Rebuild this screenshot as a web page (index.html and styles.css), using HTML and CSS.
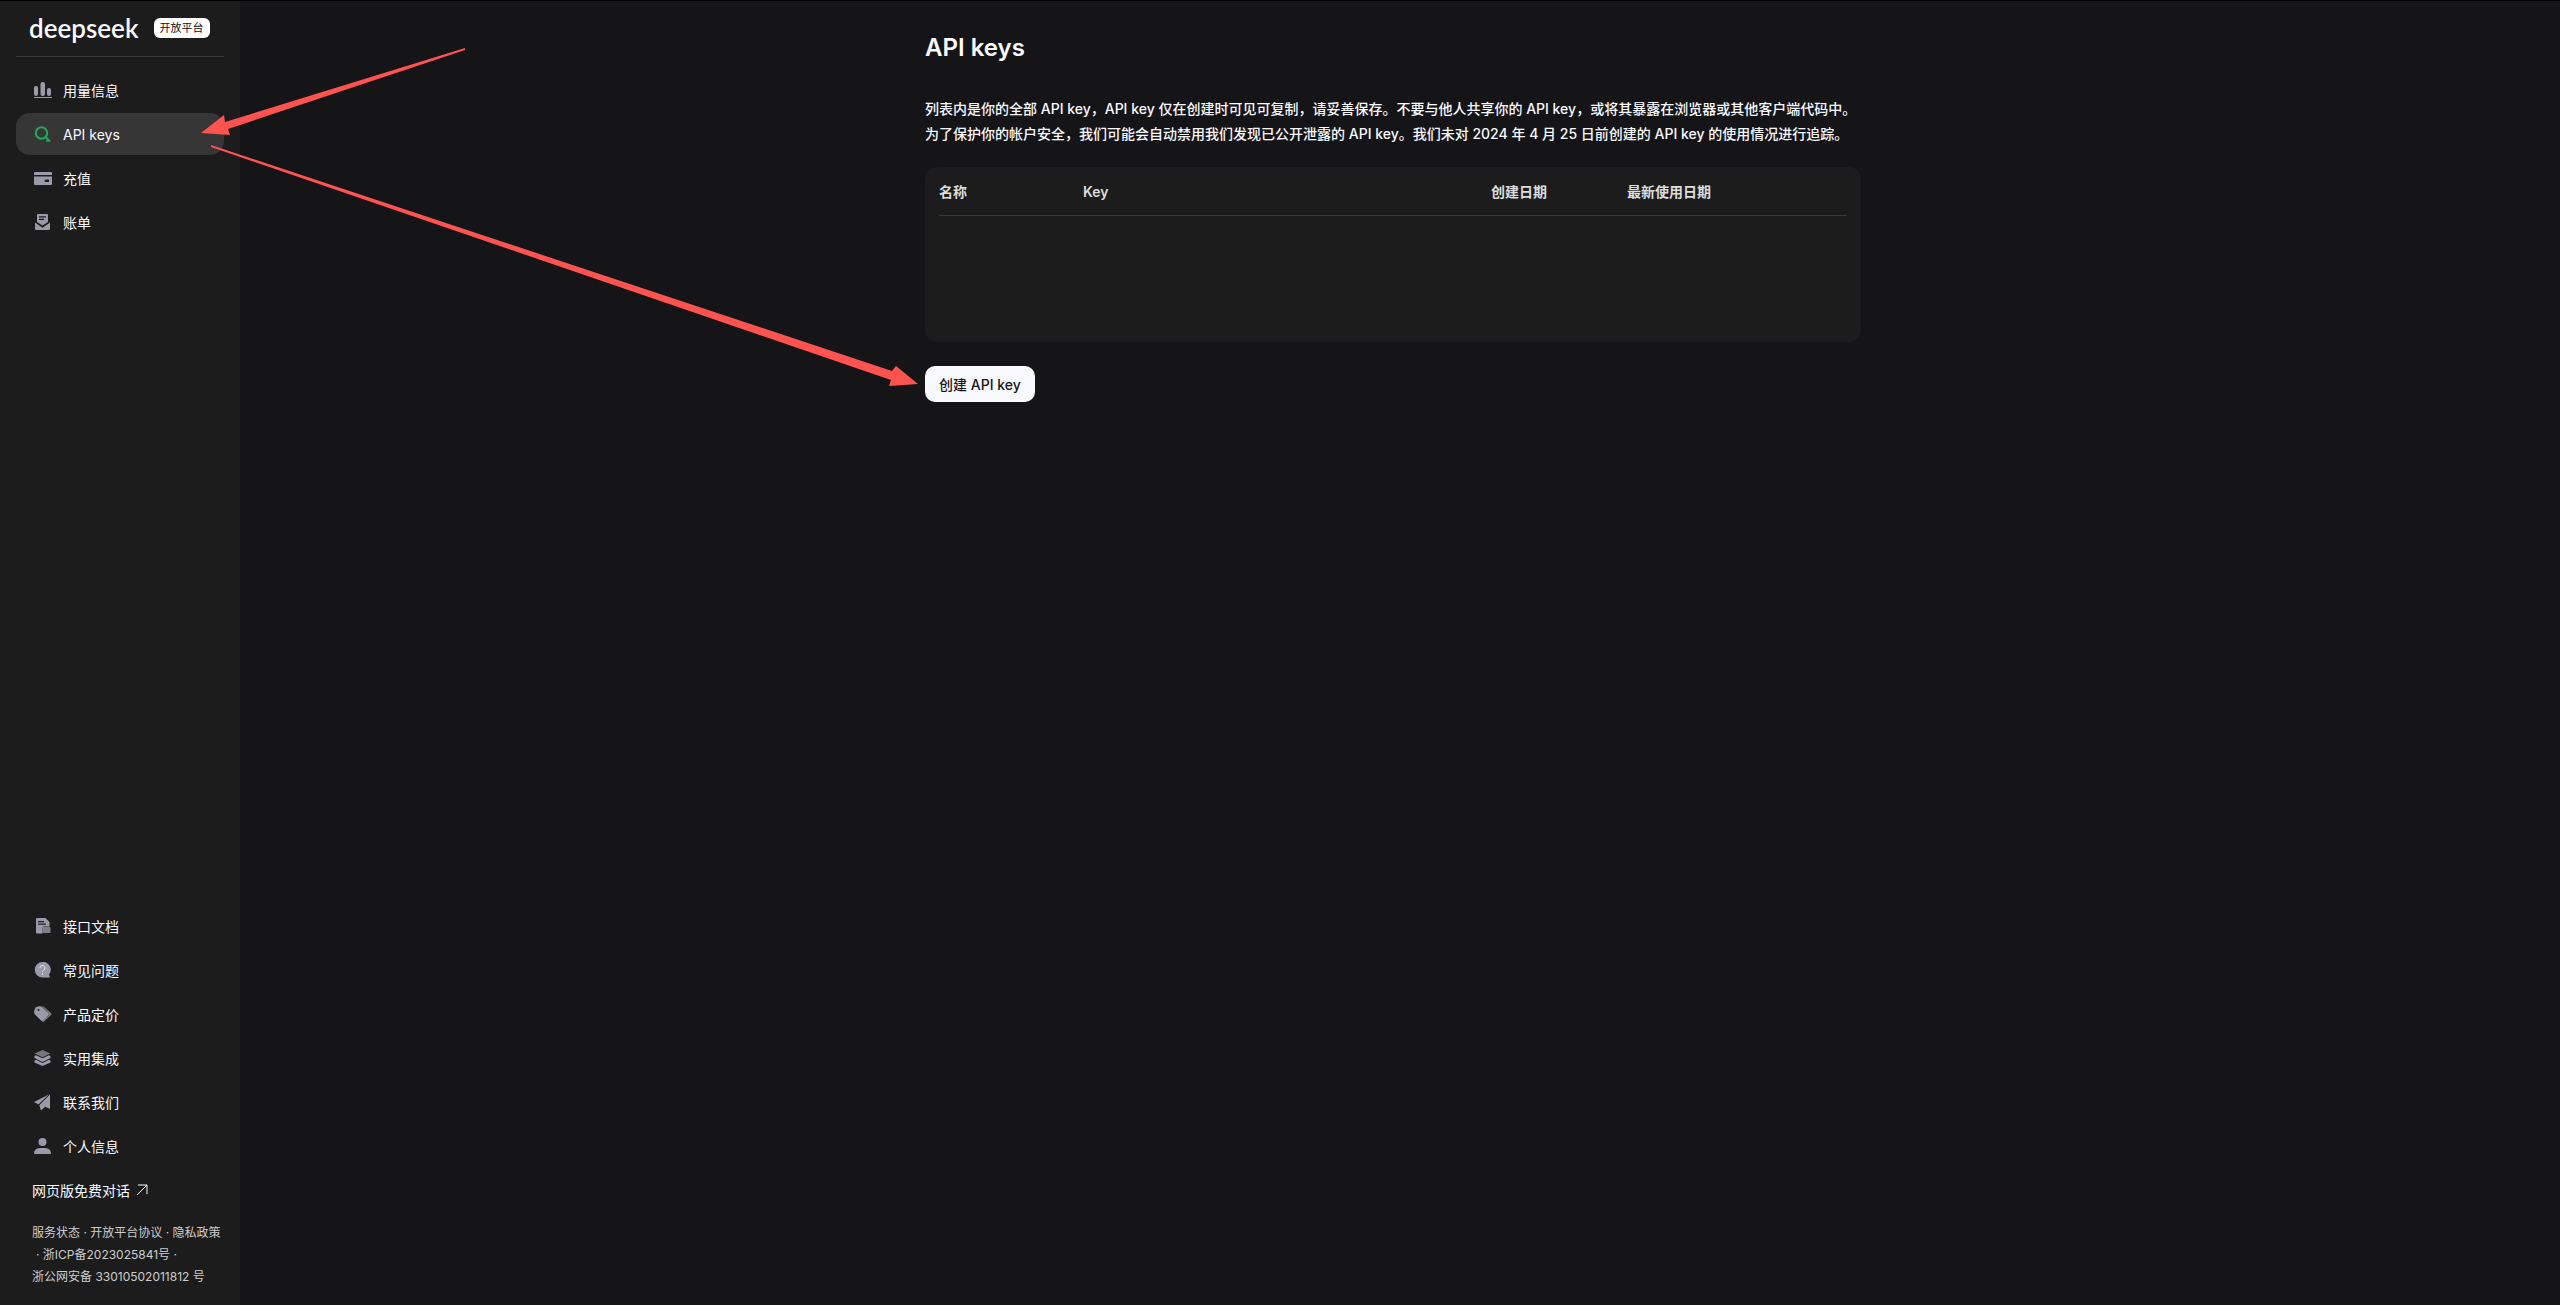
FILE: index.html
```html
<!DOCTYPE html>
<html lang="zh-CN">
<head>
<meta charset="utf-8">
<title>API keys - DeepSeek 开放平台</title>
<link rel="stylesheet" href="styles.css">
</head>
<body>
<div class="app">
  <aside class="sidebar">
    <header class="brand">
      <a class="logo" href="#">deepseek</a>
      <span class="badge">开放平台</span>
    </header>
    <nav class="nav">
      <a class="nav-item" href="#">
        <svg class="icon" viewBox="0 0 18 18"><rect x="0" y="4" width="4" height="10" rx="2"/><rect x="6.500" y="0" width="4.500" height="14" rx="2"/><rect x="13" y="6" width="4" height="8" rx="2"/><rect x="0" y="15" width="18" height="1"/></svg>
        <span>用量信息</span>
      </a>
      <a class="nav-item active" href="#">
        <svg class="icon key" viewBox="0 0 18 18"><circle cx="7.500" cy="7" r="5.700"/><path d="M11.500 11L16 15.500M12.500 15.200L14.800 13"/></svg>
        <span>API keys</span>
      </a>
      <a class="nav-item" href="#">
        <svg class="icon" viewBox="0 0 18 18"><path d="M1 2h16q1 0 1 1v2H0V3q0-1 1-1z"/><path fill-rule="evenodd" d="M0 6.500h18V14q0 1-1 1H1q-1 0-1-1zM12 9.500a1.500 1.300 0 0 0 0 2.600h3V9.500z"/></svg>
        <span>充值</span>
      </a>
      <a class="nav-item" href="#">
        <svg class="icon" viewBox="0 0 18 18"><path fill-rule="evenodd" d="M4 0h9q1 0 1 1v7l-5.500 3.600L3 8V1q0-1 1-1zM5 2.200v1.200h7V2.200zM5 4.700v1.200h5V4.700z"/><path d="M1 8.500l7.500 5.200L16 8.500V15q0 1-1 1H2q-1 0-1-1z"/></svg>
        <span>账单</span>
      </a>
    </nav>
    <nav class="nav nav-bottom">
      <a class="nav-item" href="#">
        <svg class="icon" viewBox="0 0 18 18"><path fill-rule="evenodd" d="M3 0h8.500l4 4v4.500H10q-1.500 0-1.500 1.500v5.500H3q-1 0-1-1V1q0-1 1-1zM4 3v1.200h6V3zM4 5.500v1.200h8V5.500z"/><rect x="8.500" y="9" width="8" height="6" rx="1" opacity=".8"/></svg>
        <span>接口文档</span>
      </a>
      <a class="nav-item" href="#">
        <svg class="icon" viewBox="0 0 18 18"><path d="M8.500 0a7.700 7.700 0 1 0 0 15.500H16l-1-3A7.700 7.700 0 0 0 8.500 0z"/><path class="cut light" d="M6 6a2.500 2.500 0 1 1 3.500 2.200q-1 .6-1 1.600M8.500 11v1.500"/></svg>
        <span>常见问题</span>
      </a>
      <a class="nav-item" href="#">
        <svg class="icon" viewBox="0 0 18 18"><path fill-rule="evenodd" d="M1.500 1.500Q6-.5 8 1l6.500 6q1 1 0 2L9 14.500q-1 .9-2 0L.5 8Q-.5 5 1.500 1.500zM3.500 4a1 1 0 1 0 2 0 1 1 0 1 0-2 0z"/><path d="M9.500.5l7.500 6.500q.8 1 0 2L9.500 16l-1.800-.5L15 9q.7-1 0-1.800L8 .3z" opacity=".8"/></svg>
        <span>产品定价</span>
      </a>
      <a class="nav-item" href="#">
        <svg class="icon" viewBox="0 0 18 18"><path d="M8.500 0l8 3.500-8 3.700-8-3.700z" opacity=".7"/><path d="M.5 6L2 5.300l6.500 3 6.500-3 1.500.7v2l-8 4-8-4z"/><path d="M.5 10.500L2 9.800l6.500 3.200L15 9.800l1.500.7v2L8.500 16l-8-3.500z"/></svg>
        <span>实用集成</span>
      </a>
      <a class="nav-item" href="#">
        <svg class="icon" viewBox="0 0 18 18"><path d="M15.800 0L0 8l4.500 2.500z"/><path d="M16 0v15l-4.800-2.200L7 16.500 5.300 11z"/><path class="cut thin" d="M15.500 .5L4.800 11"/></svg>
        <span>联系我们</span>
      </a>
      <a class="nav-item" href="#">
        <svg class="icon" viewBox="0 0 18 18"><circle cx="8.500" cy="4" r="4"/><path d="M0 16q0-6 6-6h5q6 0 6 6z"/></svg>
        <span>个人信息</span>
      </a>
      <a class="nav-item chat-link" href="#">
        <span>网页版免费对话</span>
        <svg class="arrow-icon" viewBox="0 0 12 12"><path d="M1 11L11 1M2 1h9v9"/></svg>
      </a>
    </nav>
    <footer class="legal">
      <div><a href="#">服务状态</a> · <a href="#">开放平台协议</a> · <a href="#">隐私政策</a></div>
      <div class="icp">· <a href="#">浙ICP备2023025841号</a> ·</div>
      <div><a href="#">浙公网安备 33010502011812 号</a></div>
    </footer>
  </aside>
  <main class="main">
    <div class="content">
      <h1>API keys</h1>
      <p>列表内是你的全部 API key，API key 仅在创建时可见可复制，请妥善保存。不要与他人共享你的 API key，或将其暴露在浏览器或其他客户端代码中。</p>
      <p>为了保护你的帐户安全，我们可能会自动禁用我们发现已公开泄露的 API key。我们未对 2024 年 4 月 25 日前创建的 API key 的使用情况进行追踪。</p>
      <section class="card">
        <table class="keys">
          <colgroup><col class="col-name"><col class="col-key"><col class="col-created"><col></colgroup>
          <thead><tr><th scope="col">名称</th><th scope="col">Key</th><th scope="col">创建日期</th><th scope="col">最新使用日期</th></tr></thead>
          <tbody></tbody>
        </table>
      </section>
      <button class="create" type="button">创建 API key</button>
    </div>
  </main>
  <svg class="annotations" viewBox="0 0 940 400" aria-hidden="true">
    <path d="M201 133L224 115L225 122L465 48V50L228 129L230 135z"/>
    <path d="M211 145L892 371L896 366L918 384L889 386L891 380L211 147z"/>
  </svg>
</div>
</body>
</html>
```
FILE: styles.css
```css
* { box-sizing: border-box; }

body {
  margin: 0;
  background: #151518;
  color: #f8faff;
  font: 14px/25px Inter, "Noto Sans CJK SC", sans-serif;
}

a { color: inherit; text-decoration: none; }

.app {
  position: relative;
  display: flex;
  min-height: 100vh;
  border-top: 1px solid #000;
}

.sidebar {
  display: flex;
  flex-direction: column;
  flex: none;
  width: 240px;
  padding: 0 16px 17px;
  background: #1c1c1c;
}

.brand {
  display: flex;
  align-items: center;
  gap: 15px;
  height: 56px;
  margin-bottom: 12px;
  padding: 0 0 2px 13px;
  border-bottom: 1px solid #3a3a3a;
}

.logo {
  font: 600 26px/28px Lato, sans-serif;
}

.badge {
  padding: 0 6px;
  border-radius: 6px;
  background: #fff;
  color: #111;
  font-size: 11px;
  line-height: 20px;
}

.nav {
  display: flex;
  flex-direction: column;
  gap: 2px;
}

.nav-bottom { margin-top: auto; }

.nav-item {
  display: flex;
  align-items: center;
  gap: 11px;
  height: 42px;
  padding: 0 18px;
  border-radius: 14px;
}

.active { background: #363636; }

.icon {
  width: 18px;
  height: 18px;
  margin-top: 2px;
  fill: #9a9aa8;
}

.icon .cut { fill: none; stroke: #1c1c1c; stroke-width: 1; }
.icon .light { stroke: #e4e4ec; }
.key { fill: none; stroke: #22a95e; stroke-width: 2; }

.chat-link { padding: 0 16px; gap: 6px; }

.arrow-icon {
  width: 12px;
  height: 12px;
  fill: none;
  stroke: #f8faff;
}

.legal {
  padding: 11px 0 0 16px;
  color: #cdcdcd;
  font-size: 12px;
  line-height: 22px;
  white-space: nowrap;
}

.icp { padding-left: 4px; }

.main {
  display: flex;
  flex: 1;
  justify-content: center;
  padding: 31px 14px 40px 0;
}

.content { width: 100%; max-width: 936px; }

h1 {
  margin: 0 0 32px;
  font-size: 24px;
  font-weight: 600;
  line-height: 32px;
}

p { margin: 0; font-weight: 500; }

.card {
  min-height: 175px;
  margin: 21px 0 24px;
  padding: 0 14px;
  border-radius: 12px;
  background: #1c1c1c;
}

.keys {
  width: 100%;
  table-layout: fixed;
  border-collapse: collapse;
}

.keys th {
  height: 48px;
  padding: 2px 0 0;
  border-bottom: 1px solid #3a3a3a;
  color: #dcdcdc;
  font-weight: 600;
  text-align: left;
}

.col-name { width: 144px; }
.col-key { width: 408px; }
.col-created { width: 136px; }

.create {
  height: 36px;
  padding: 0 14px;
  border: 0;
  border-radius: 10px;
  background: #f9faff;
  color: #151517;
  font: inherit;
  font-weight: 500;
}

.annotations {
  position: absolute;
  top: -1px;
  left: 0;
  width: 940px;
  height: 400px;
  fill: #ff5350;
  pointer-events: none;
}
```
